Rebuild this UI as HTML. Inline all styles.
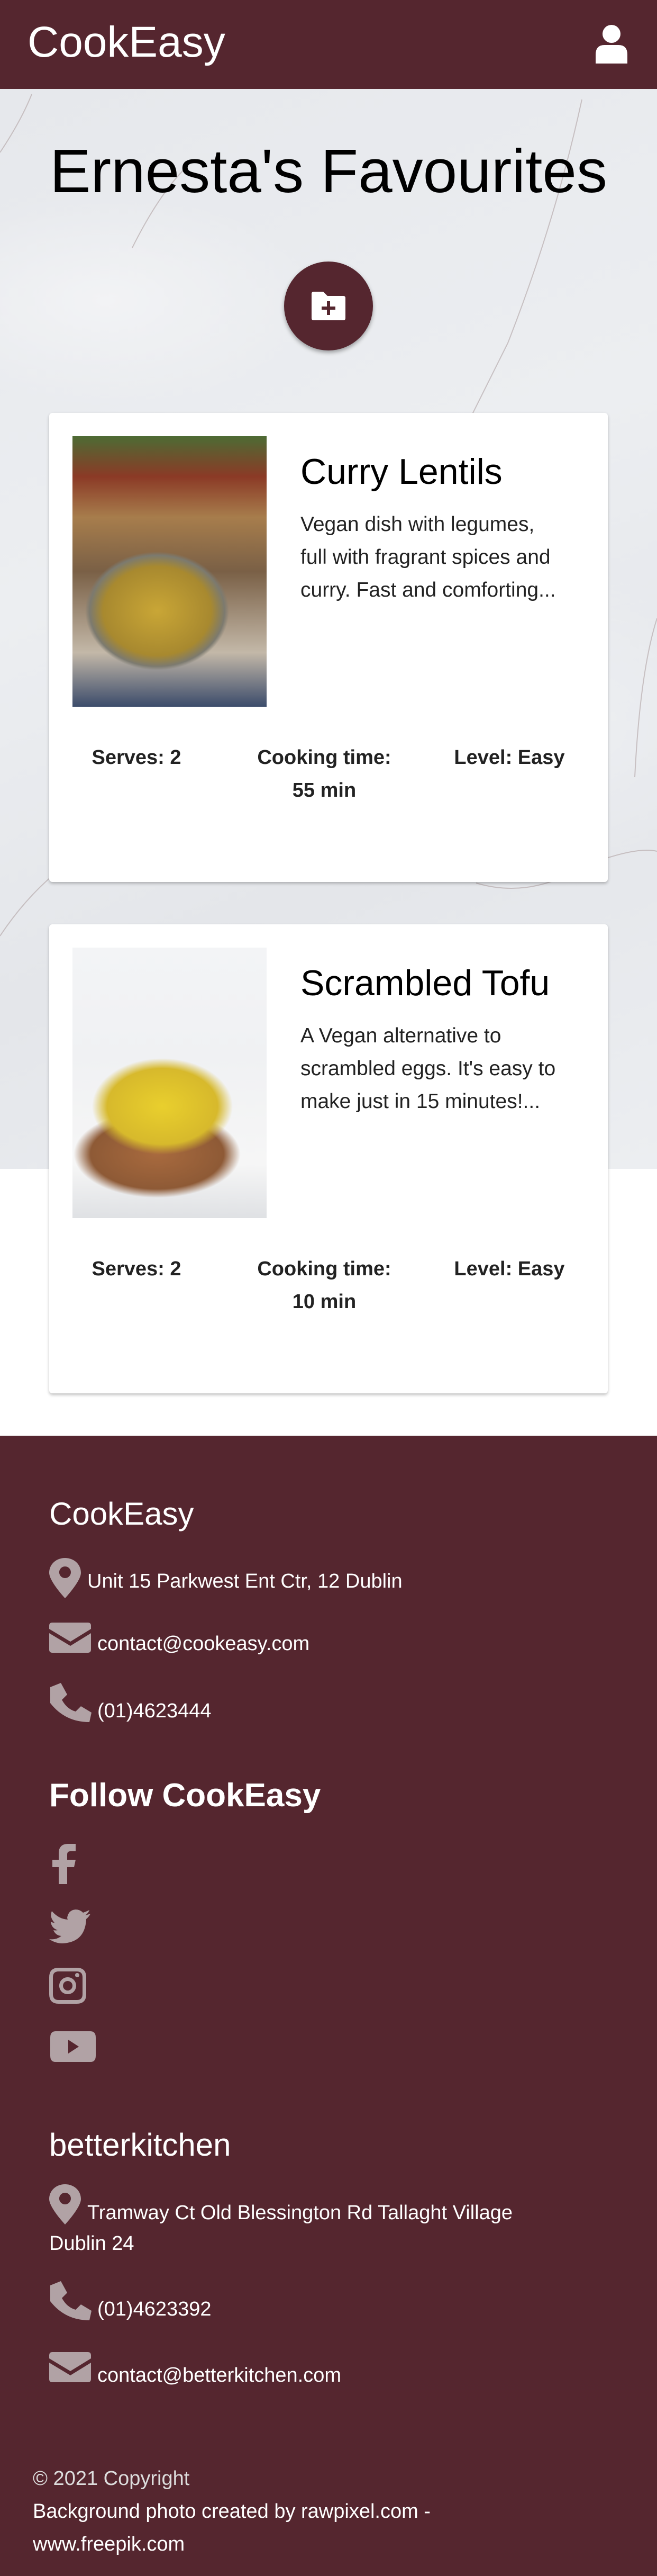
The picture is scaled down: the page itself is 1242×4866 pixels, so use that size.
<!DOCTYPE html>
<html><head><meta charset="utf-8"><style>
*{margin:0;padding:0;box-sizing:border-box}
body{width:1242px;height:4866px;position:relative;font-family:"Liberation Sans",sans-serif;background:#fff;overflow:hidden}
.a{position:absolute;white-space:nowrap}
.hdr{position:absolute;left:0;top:0;width:1242px;height:168px;background:#55262f}
.marble{position:absolute;left:0;top:168px;width:1242px;height:2040px;background:
radial-gradient(ellipse 400px 200px at 200px 400px,#f2f3f5,transparent),
radial-gradient(ellipse 500px 300px at 1000px 1200px,#eef0f3,transparent),
linear-gradient(160deg,#e6e8ec,#eceef1 40%,#e4e6ea 70%,#eceef1)}
.card{position:absolute;left:93px;width:1056px;height:886px;background:#fff;border-radius:6px;box-shadow:0 3px 6px rgba(0,0,0,.25)}
.img{position:absolute;left:44px;top:44px;width:367px;height:511px}
.t{position:absolute;left:475px;top:72px;font-size:68px;color:#000}
.d{position:absolute;left:475px;top:180px;font-size:39px;line-height:62px;color:#222}
.s{position:absolute;top:620px;font-size:38px;line-height:62px;color:#222;font-weight:bold;text-align:center}
.foot{position:absolute;left:0;top:2712px;width:1242px;height:2154px;background:#55262f;color:#fff}
.f{position:absolute;white-space:nowrap;font-size:38px;color:#fff}
.ic{position:absolute;fill:#b1a2a5}
</style></head><body>
<div class="hdr"></div>
<div class="a" style="left:52px;top:30px;font-size:82px;color:#fff;line-height:100px">CookEasy</div>
<svg class="a" style="left:1123px;top:45px" width="66" height="75" viewBox="0 0 66 75"><circle cx="33" cy="19" r="17" fill="#fff"/><path d="M3 75 V58 Q3 40 20 40 H46 Q63 40 63 58 V75 Z" fill="#fff"/></svg>
<div class="marble"></div>
<svg class="a" style="left:0;top:168px" width="1242" height="2040"><g stroke="#b8acae" stroke-width="2" fill="none" opacity=".7"><path d="M0 120 Q40 60 60 10"/><path d="M1100 20 Q1050 250 960 480 Q900 600 850 700"/><path d="M0 1600 Q100 1450 250 1400 Q380 1300 420 1200"/><path d="M900 1500 Q1000 1530 1100 1470 Q1200 1430 1242 1440"/><path d="M1242 1000 Q1210 1100 1200 1300"/><path d="M250 300 Q300 200 350 150"/></g></svg>
<div class="a" style="left:0;width:1242px;top:248px;text-align:center;font-size:116px;line-height:150px;color:#000">Ernesta's Favourites</div>
<div class="a" style="left:537px;top:494px;width:168px;height:168px;border-radius:50%;background:#55262f;box-shadow:0 4px 8px rgba(0,0,0,.35)"></div>
<svg class="a" style="left:587px;top:549px" width="68" height="58" viewBox="0 0 68 58"><path d="M2 6 Q2 2 6 2 H24 L32 10 H62 Q66 10 66 14 V52 Q66 56 62 56 H6 Q2 56 2 52 Z" fill="#fff"/><path d="M34 20 V46 M21 33 H47" stroke="#55262f" stroke-width="6"/></svg>

<div class="card" style="top:780px">
<div class="img" style="background:radial-gradient(ellipse 170px 140px at 160px 330px,#c9a636,#a8892f 60%,#7c7a6f 75%,transparent 80%),linear-gradient(180deg,#4d6b34 0%,#8b3a26 15%,#a77d4c 30%,#7a6046 50%,#c3b8a8 80%,#3c4c6b 100%)"></div>
<div class="t">Curry Lentils</div>
<div class="d">Vegan dish with legumes,<br>full with fragrant spices and<br>curry. Fast and comforting...</div>
<div class="s" style="left:65px;width:200px">Serves: 2</div>
<div class="s" style="left:370px;width:300px">Cooking time:<br>55 min</div>
<div class="s" style="left:735px;width:270px">Level: Easy</div>
</div>

<div class="card" style="top:1746px">
<div class="img" style="background:radial-gradient(ellipse 190px 130px at 170px 300px,#e9cf2d,#d7b92c 55%,transparent 70%),radial-gradient(ellipse 210px 110px at 160px 390px,#a86a3e,#8e5a36 60%,transparent 75%),linear-gradient(180deg,#f3f4f6 0%,#f0f1f3 40%,#f6f6f6 80%,#dfe1e4 100%)"></div>
<div class="t">Scrambled Tofu</div>
<div class="d">A Vegan alternative to<br>scrambled eggs. It's easy to<br>make just in 15 minutes!...</div>
<div class="s" style="left:65px;width:200px">Serves: 2</div>
<div class="s" style="left:370px;width:300px">Cooking time:<br>10 min</div>
<div class="s" style="left:735px;width:270px">Level: Easy</div>
</div>

<div class="foot"></div>
<div class="f" style="left:93px;top:2825px;font-size:60px;line-height:70px">CookEasy</div>
<svg class="ic" style="left:93px;top:2943px" width="60" height="76" viewBox="0 0 60 76"><path d="M30 0 C13 0 0 12 0 28 C0 44 30 76 30 76 C30 76 60 44 60 28 C60 12 47 0 30 0 Z M30 16 A11 11 0 1 1 29.9 16 Z" fill-rule="evenodd"/></svg>
<div class="f" style="left:165px;top:2964px;line-height:46px">Unit 15 Parkwest Ent Ctr, 12 Dublin</div>
<svg class="ic" style="left:93px;top:3065px" width="79" height="57" viewBox="0 0 79 57"><path d="M0 6 Q0 0 6 0 H73 Q79 0 79 6 V12 L40 36 L0 12 Z"/><path d="M0 20 L40 44 L79 20 V51 Q79 57 73 57 H6 Q0 57 0 51 Z"/></svg>
<div class="f" style="left:184px;top:3082px;line-height:46px">contact@cookeasy.com</div>
<svg class="ic" style="left:93px;top:3177px" width="80" height="76" viewBox="0 0 80 76"><path d="M2 10 L22 2 L34 24 L24 34 Q34 52 50 56 L60 46 L80 58 L76 76 Q30 76 2 40 Z"/></svg>
<div class="f" style="left:184px;top:3209px;line-height:46px">(01)4623444</div>
<div class="f" style="left:93px;top:3356px;font-size:62px;font-weight:bold;line-height:72px">Follow CookEasy</div>
<svg class="ic" style="left:97px;top:3483px" width="46" height="76" viewBox="0 0 46 76"><path d="M14 76 V44 H2 V30 H14 V18 Q14 0 32 0 H46 V14 H36 Q30 14 30 20 V30 H46 L43 44 H30 V76 Z"/></svg>
<svg class="ic" style="left:93px;top:3607px" width="78" height="64" viewBox="0 0 78 64"><path d="M78 8 Q72 10 68 11 Q74 7 76 1 Q70 4 64 6 Q58 0 50 0 Q36 1 34 16 L35 19 Q18 18 5 3 Q0 14 10 25 Q6 25 3 23 Q4 35 16 39 Q12 40 8 39 Q12 49 23 50 Q13 58 0 56 Q12 64 25 64 Q68 62 70 18 Q75 14 78 8 Z"/></svg>
<svg class="ic" style="left:93px;top:3717px" width="70" height="68" viewBox="0 0 70 68"><path d="M18 0 H52 Q70 0 70 18 V50 Q70 68 52 68 H18 Q0 68 0 50 V18 Q0 0 18 0 Z M18 7 Q7 7 7 18 V50 Q7 61 18 61 H52 Q63 61 63 50 V18 Q63 7 52 7 Z M35 18 A16 16 0 1 1 34.9 18 Z M35 25 A9 9 0 1 0 35.1 25 Z M53 10 A4 4 0 1 1 52.9 10 Z" fill-rule="evenodd"/></svg>
<svg class="ic" style="left:95px;top:3837px" width="86" height="58" viewBox="0 0 86 58"><path d="M10 0 H76 Q86 0 86 12 V46 Q86 58 76 58 H10 Q0 58 0 46 V12 Q0 0 10 0 Z M34 16 V42 L54 29 Z" fill-rule="evenodd"/></svg>
<div class="f" style="left:93px;top:4017px;font-size:60px;line-height:70px">betterkitchen</div>
<svg class="ic" style="left:93px;top:4126px" width="60" height="76" viewBox="0 0 60 76"><path d="M30 0 C13 0 0 12 0 28 C0 44 30 76 30 76 C30 76 60 44 60 28 C60 12 47 0 30 0 Z M30 16 A11 11 0 1 1 29.9 16 Z" fill-rule="evenodd"/></svg>
<div class="f" style="left:165px;top:4157px;line-height:46px">Tramway Ct Old Blessington Rd Tallaght Village</div>
<div class="f" style="left:93px;top:4215px;line-height:46px">Dublin 24</div>
<svg class="ic" style="left:93px;top:4307px" width="80" height="76" viewBox="0 0 80 76"><path d="M2 10 L22 2 L34 24 L24 34 Q34 52 50 56 L60 46 L80 58 L76 76 Q30 76 2 40 Z"/></svg>
<div class="f" style="left:184px;top:4339px;line-height:46px">(01)4623392</div>
<svg class="ic" style="left:93px;top:4443px" width="79" height="57" viewBox="0 0 79 57"><path d="M0 6 Q0 0 6 0 H73 Q79 0 79 6 V12 L40 36 L0 12 Z"/><path d="M0 20 L40 44 L79 20 V51 Q79 57 73 57 H6 Q0 57 0 51 Z"/></svg>
<div class="f" style="left:184px;top:4464px;line-height:46px">contact@betterkitchen.com</div>
<div class="f" style="left:62px;top:4659px;line-height:46px;color:#ddd">© 2021 Copyright</div>
<div class="f" style="left:62px;top:4721px;line-height:46px">Background photo created by rawpixel.com -</div>
<div class="f" style="left:62px;top:4783px;line-height:46px">www.freepik.com</div>
</body></html>
